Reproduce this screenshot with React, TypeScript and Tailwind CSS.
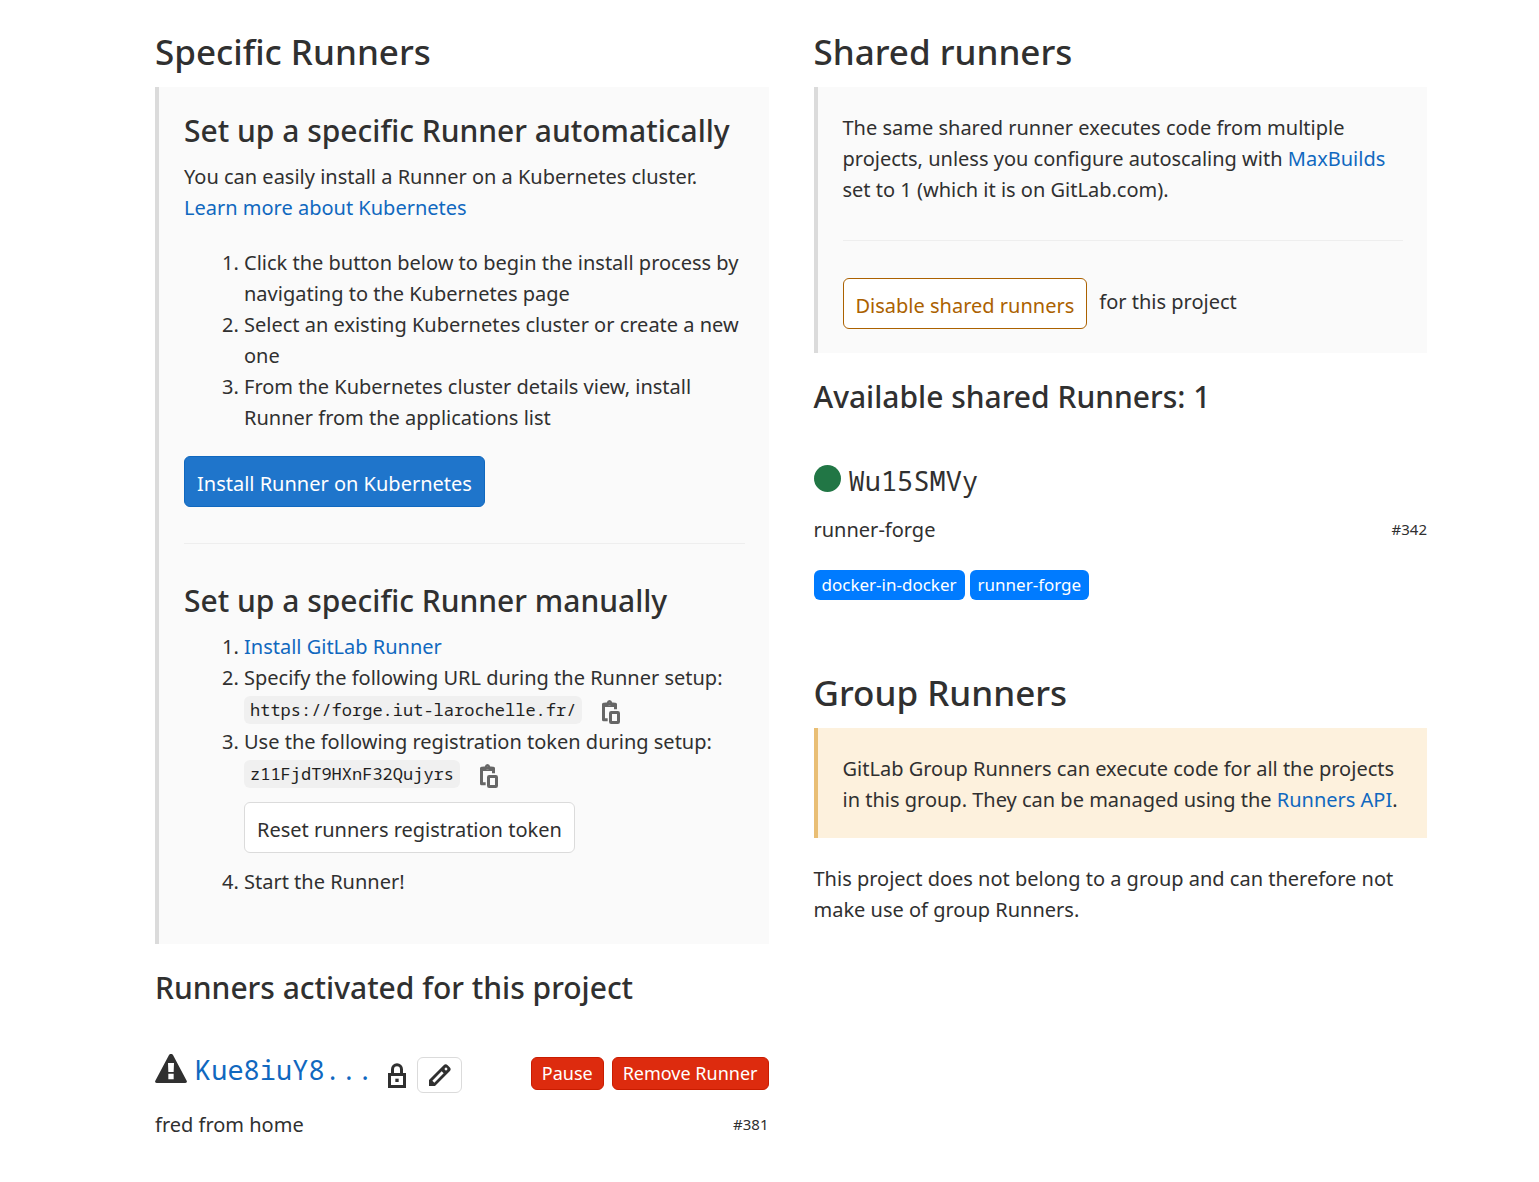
import type { ReactNode } from 'react';

const LINK = 'text-[#1068bf] hover:underline';

function SectionTitle({ children }: { children: ReactNode }) {
  return <h2 className="mb-3 text-[35px] leading-[47px] font-medium">{children}</h2>;
}

function SubTitle({ children }: { children: ReactNode }) {
  return <h3 className="text-[30px] leading-[40px] font-medium">{children}</h3>;
}

function Callout({ children }: { children: ReactNode }) {
  return <div className="border-l-4 border-[#dbdbdb] bg-[#fafafa] py-6 pr-6 pl-[25px]">{children}</div>;
}

function WarningIcon() {
  return (
    <svg className="h-8 w-8 shrink-0" viewBox="0 0 96 96" role="img" aria-label="Runner has not contacted yet">
      <path
        fill="#303030"
        fillRule="evenodd"
        d="M42 3Q48 -5 54 3L95 80Q98 87 91 87H5Q-2 87 1 80ZM39 27L40 54H56L57 27ZM40 59V76H56V59Z"
      />
    </svg>
  );
}

function LockIcon() {
  return (
    <svg className="h-[25px] w-[18px] shrink-0" viewBox="0 0 54 75" fill="none" stroke="#303030" role="img" aria-label="Locked to this project">
      <rect x="4.5" y="34.5" width="45" height="36" strokeWidth="9" />
      <path d="M13.5 32V19a13.5 13.5 0 0 1 27 0V32" strokeWidth="9" />
      <rect x="22" y="47" width="10" height="10" fill="#303030" stroke="none" />
    </svg>
  );
}

function PencilIcon() {
  return (
    <svg className="h-[22px] w-[22px]" viewBox="0 0 66 66" aria-hidden="true">
      <path
        fill="#303030"
        fillRule="evenodd"
        d="M0 66V48L44 4Q50 -2 56 4L62 10Q68 16 62 22L18 66ZM10 50L16 56L44 28L38 22ZM51 10L46 15L51 20L56 15Z"
      />
    </svg>
  );
}

function ClipboardIcon() {
  return (
    <svg className="h-6 w-[18px]" viewBox="0 0 54 72" fill="none" stroke="#666" aria-hidden="true">
      <path d="M17 59H4.5V12.5H40.5V28" strokeWidth="9" strokeLinejoin="round" />
      <path fill="#666" stroke="none" fillRule="evenodd" d="M8 8H14Q16 0 22.5 0T31 8H37V21H8ZM22.5 8a5 5 0 1 0 .1 0Z" />
      <rect x="25.5" y="37.5" width="24" height="30" rx="2" strokeWidth="9" />
    </svg>
  );
}

function CopyableCode({ value, label }: { value: string; label: string }) {
  return (
    <div className="flex h-[33px] items-center gap-5">
      <code className="rounded-md bg-[#f0f0f0] px-[6px] font-['Noto_Sans_Mono','DejaVu_Sans_Mono',monospace] text-[17px] leading-[28px] text-[#1f1f1f]">
        {value}
      </code>
      <button type="button" aria-label={label} className="mt-1">
        <ClipboardIcon />
      </button>
    </div>
  );
}

function DangerButton({ children }: { children: ReactNode }) {
  return (
    <button type="button" className="h-[33px] rounded-[6px] border border-[#c91c00] bg-[#dd2b0e] px-[10px] text-[18px] leading-[31px] text-white">
      {children}
    </button>
  );
}

function Tag({ children }: { children: ReactNode }) {
  return <span className="rounded-[6px] bg-[#007bff] px-2 text-[17px] leading-[30px] text-white">{children}</span>;
}

function RunnerDescription({ name, id }: { name: string; id: string }) {
  return (
    <div className="mt-4 flex items-center justify-between">
      <p>{name}</p>
      <small className="text-[15px]">{id}</small>
    </div>
  );
}

function SpecificRunners() {
  return (
    <section>
      <SectionTitle>Specific Runners</SectionTitle>
      <Callout>
        <SubTitle>Set up a specific Runner automatically</SubTitle>
        <p className="mt-[10px]">
          You can easily install a Runner on a Kubernetes cluster.{' '}
          <a href="#kubernetes" className={LINK}>Learn more about Kubernetes</a>
        </p>
        <ol className="mt-6 list-decimal pl-[60px]">
          <li>Click the button below to begin the install process by navigating to the Kubernetes page</li>
          <li>Select an existing Kubernetes cluster or create a new one</li>
          <li>From the Kubernetes cluster details view, install Runner from the applications list</li>
        </ol>
        <button type="button" className="mt-[23px] block h-[51px] rounded-[6px] border border-[#1068bf] bg-[#1f75cb] px-3 pt-1 text-white">
          Install Runner on Kubernetes
        </button>
        <hr className="mt-9 mb-[37px] border-[#eee]" />
        <SubTitle>Set up a specific Runner manually</SubTitle>
        <ol className="mt-[10px] list-decimal pb-[23px] pl-[60px]">
          <li><a href="#install" className={LINK}>Install GitLab Runner</a></li>
          <li>
            Specify the following URL during the Runner setup:
            <CopyableCode value="https://forge.iut-larochelle.fr/" label="Copy URL" />
          </li>
          <li>
            Use the following registration token during setup:
            <CopyableCode value="z11FjdT9HXnF32Qujyrs" label="Copy token" />
            <button type="button" className="mt-3 mb-[13px] block h-[51px] rounded-[6px] border border-[#dbdbdb] bg-white px-3 pt-1">
              Reset runners registration token
            </button>
          </li>
          <li>Start the Runner!</li>
        </ol>
      </Callout>
      <div className="mt-6">
        <SubTitle>Runners activated for this project</SubTitle>
      </div>
      <div className="mt-[49px] flex items-start justify-between">
        <div className="flex h-9 items-center">
          <div className="flex items-center gap-2 pb-[10px]">
            <WarningIcon />
            <a href="#runner" className="font-['Noto_Sans_Mono','DejaVu_Sans_Mono',monospace] text-[27px] leading-[30px] text-[#1068bf]">
              Kue8iuY8...
            </a>
          </div>
          <span className="mr-[11px] ml-[15px]"><LockIcon /></span>
          <button type="button" aria-label="Edit runner" className="flex h-9 w-[45px] items-center justify-center rounded-[6px] border border-[#dbdbdb] bg-white">
            <PencilIcon />
          </button>
        </div>
        <div className="flex gap-2">
          <DangerButton>Pause</DangerButton>
          <DangerButton>Remove Runner</DangerButton>
        </div>
      </div>
      <RunnerDescription name="fred from home" id="#381" />
    </section>
  );
}

function SharedRunners() {
  return (
    <section>
      <SectionTitle>Shared runners</SectionTitle>
      <Callout>
        <p className="pt-px">
          The same shared runner executes code from multiple projects, unless you configure autoscaling with{' '}
          <a href="#maxbuilds" className={LINK}>MaxBuilds</a> set to 1 (which it is on GitLab.com).
        </p>
        <hr className="mt-[35px] mb-[37px] border-[#eee]" />
        <div className="flex items-center gap-3">
          <button type="button" className="h-[51px] rounded-[6px] border border-[#ab6100] bg-white px-3 pt-1 text-[#ab6100]">
            Disable shared runners
          </button>
          <span className="pb-1">for this project</span>
        </div>
      </Callout>
      <div className="mt-6">
        <SubTitle>Available shared Runners: 1</SubTitle>
      </div>
      <div className="mt-[45px] flex h-9 items-center gap-2">
        <span className="mb-1 h-[27px] w-[27px] rounded-full bg-[#217645]" role="img" aria-label="Online" />
        <span className="font-['Noto_Sans_Mono','DejaVu_Sans_Mono',monospace] text-[27px]">Wu15SMVy</span>
      </div>
      <RunnerDescription name="runner-forge" id="#342" />
      <div className="mt-[25px] flex gap-[5px]">
        <Tag>docker-in-docker</Tag>
        <Tag>runner-forge</Tag>
      </div>
    </section>
  );
}

function GroupRunners() {
  return (
    <section className="mt-[69px]">
      <SectionTitle>Group Runners</SectionTitle>
      <div className="border-l-4 border-[#e9be74] bg-[#fdf1dd] pt-[25px] pr-6 pb-[23px] pl-[25px]">
        <p>
          GitLab Group Runners can execute code for all the projects in this group. They can be managed using the{' '}
          <a href="#api" className={LINK}>Runners API</a>.
        </p>
      </div>
      <p className="mt-[25px]">This project does not belong to a group and can therefore not make use of group Runners.</p>
    </section>
  );
}

export default function App() {
  return (
    <main className="grid min-h-screen grid-cols-2 gap-[45px] bg-white pt-7 pr-28 pb-10 pl-[155px] font-['Noto_Sans','Open_Sans',sans-serif] text-[20px] leading-[31px] text-[#303030]">
      <SpecificRunners />
      <div>
        <SharedRunners />
        <GroupRunners />
      </div>
    </main>
  );
}
